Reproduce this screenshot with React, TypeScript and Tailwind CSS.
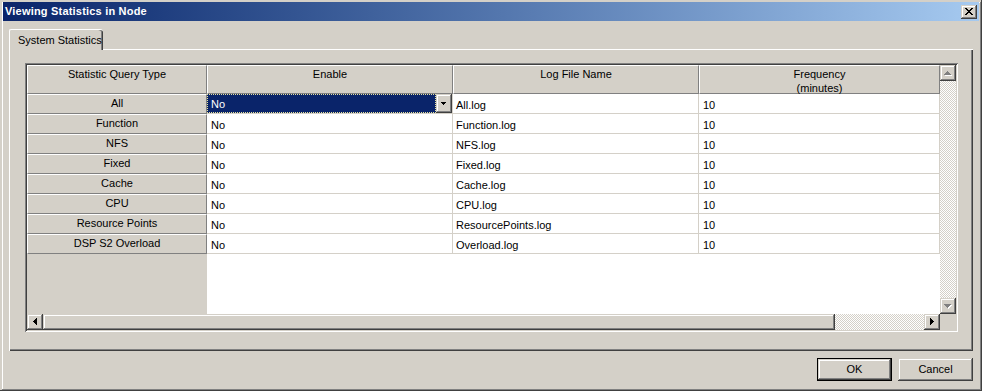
import React from 'react';

const rows = [
  { type: 'All', file: 'All.log' },
  { type: 'Function', file: 'Function.log' },
  { type: 'NFS', file: 'NFS.log' },
  { type: 'Fixed', file: 'Fixed.log' },
  { type: 'Cache', file: 'Cache.log' },
  { type: 'CPU', file: 'CPU.log' },
  { type: 'Resource Points', file: 'ResourcePoints.log' },
  { type: 'DSP S2 Overload', file: 'Overload.log' },
];

const raised =
  'bg-[#d4d0c8] shadow-[inset_-1px_-1px_#404040,inset_1px_1px_#d4d0c8,inset_-2px_-2px_#808080,inset_2px_2px_#ffffff]';
const checker =
  'bg-[image:repeating-conic-gradient(#d4d0c8_0_25%,#ffffff_0_50%)] bg-[length:2px_2px]';

const Arrow: React.FC<{ dir: 'up' | 'down' | 'left' | 'right'; disabled?: boolean }> = ({ dir, disabled }) => {
  const fill = disabled ? '#808080' : '#000000';
  const shapes: Record<string, number[][]> = {
    up: [[7, 6, 1, 1], [6, 7, 3, 1], [5, 8, 5, 1], [4, 9, 7, 1]],
    down: [[4, 6, 7, 1], [5, 7, 5, 1], [6, 8, 3, 1], [7, 9, 1, 1]],
    left: [[6, 7, 1, 1], [7, 6, 1, 3], [8, 5, 1, 5], [9, 4, 1, 7]],
    right: [[6, 4, 1, 7], [7, 5, 1, 5], [8, 6, 1, 3], [9, 7, 1, 1]],
  };
  return (
    <svg width="16" height="16" viewBox="0 0 16 16" shapeRendering="crispEdges">
      {disabled &&
        shapes[dir].map((r, i) => (
          <rect key={'s' + i} x={r[0] + 1} y={r[1] + 1} width={r[2]} height={r[3]} fill="#ffffff" />
        ))}
      {shapes[dir].map((r, i) => (
        <rect key={i} x={r[0]} y={r[1]} width={r[2]} height={r[3]} fill={fill} />
      ))}
    </svg>
  );
};

const ScrollBtn: React.FC<{ dir: 'up' | 'down' | 'left' | 'right'; disabled?: boolean }> = ({ dir, disabled }) => (
  <div className={`w-[16px] h-[16px] shrink-0 ${raised}`}>
    <Arrow dir={dir} disabled={disabled} />
  </div>
);

const headCell = 'bg-[#d4d0c8] border border-t-white border-l-white border-r-[#808080] border-b-[#808080]';
const dataCell = 'bg-white border-r border-b border-[#d4d0c8] pl-[3px] pt-[3px] flex items-center';

export default function App() {
  return (
    <div className="w-[982px] h-[391px] bg-[#d4d0c8] pt-[2px] pl-[3px] pr-[3px] pb-[3px] flex flex-col overflow-hidden font-['Liberation_Sans',Arial,sans-serif] text-[11px] leading-[13px] text-black shadow-[inset_-1px_-1px_#404040,inset_2px_2px_#d4d0c8,inset_-2px_-2px_#808080,inset_3px_3px_#ffffff]">
      {/* Title bar */}
      <div className="h-[19px] shrink-0 flex items-center justify-between pl-[2px] pr-[2px] bg-linear-to-r from-[#0a246a] to-[#a6caf0]">
        <span className="text-white font-bold tracking-[0.2px]">Viewing Statistics in Node</span>
        <div className={`w-[16px] h-[14px] ${raised} flex items-center justify-center`}>
          <svg width="16" height="14" viewBox="0 0 16 14" shapeRendering="crispEdges">
            <path d="M4 3h2v1h1v1h2V4h1V3h2v1h-1v1h-1v1h-1v1h1v1h1v1h1v1h-2V9H9V8H7v1H6v1H4V9h1V8h1V7h1V6H6V5H5V4H4z" fill="#000" />
          </svg>
        </div>
      </div>

      {/* Body */}
      <div className="flex-1 flex flex-col px-[6px] pt-[8px]">
        <div className="flex">
          <div className="relative z-10 h-[21px] -mb-[1px] w-[94px] bg-[#d4d0c8] border-l border-t border-white rounded-tl-[2px] rounded-tr-[3px] shadow-[inset_-1px_0_#404040,inset_-2px_0_#808080] pl-[8px] pt-[4px]">
            System Statistics
          </div>
        </div>

        <div className="h-[302px] shrink-0 bg-[#d4d0c8] pt-[14px] pl-[16px] pr-[15px] pb-[19px] shadow-[inset_1px_1px_#ffffff,inset_-1px_-1px_#404040,inset_-2px_-2px_#808080]">
          <div className="h-full p-[2px] flex shadow-[inset_1px_1px_#808080,inset_-1px_-1px_#ffffff,inset_2px_2px_#404040,inset_-2px_-2px_#d4d0c8]">
            {/* Table + horizontal scrollbar */}
            <div className="w-[913px] flex flex-col">
              <div className="flex h-[29px] shrink-0">
                <div className={`w-[180px] ${headCell} text-center pt-[2px]`}>Statistic Query Type</div>
                <div className={`w-[246px] ${headCell} text-center pt-[2px]`}>Enable</div>
                <div className={`w-[246px] ${headCell} text-center pt-[2px]`}>Log File Name</div>
                <div className={`w-[241px] ${headCell} text-center pt-[1px] leading-[14px]`}>
                  <div>Frequency</div>
                  <div>(minutes)</div>
                </div>
              </div>

              {rows.map((r, i) => (
                <div key={r.type} className="flex h-[20px] shrink-0">
                  <div className={`w-[180px] ${headCell} flex items-center justify-center pb-[2px]`}>{r.type}</div>
                  {i === 0 ? (
                    <div className="w-[246px] bg-white border-r border-b border-[#d4d0c8] flex">
                      <div className="flex-1 bg-[#0a246a] text-white pl-[3px] pt-[2px] flex items-center border border-dotted border-[#e8e4a0]">
                        No
                      </div>
                      <div className={`w-[16px] ${raised}`}>
                        <svg width="16" height="19" viewBox="0 0 16 19" shapeRendering="crispEdges">
                          <rect x="5" y="8" width="5" height="1" fill="#000" />
                          <rect x="6" y="9" width="3" height="1" fill="#000" />
                          <rect x="7" y="10" width="1" height="1" fill="#000" />
                        </svg>
                      </div>
                    </div>
                  ) : (
                    <div className={`w-[246px] ${dataCell} pl-[4px]`}>No</div>
                  )}
                  <div className={`w-[246px] ${dataCell}`}>{r.file}</div>
                  <div className={`w-[241px] ${dataCell} pl-[4px]`}>10</div>
                </div>
              ))}

              <div className="flex-1 flex">
                <div className="w-[180px] bg-[#d4d0c8]" />
                <div className="flex-1 bg-white" />
              </div>

              <div className="h-[16px] shrink-0 flex">
                <ScrollBtn dir="left" />
                <div className={`w-[792px] h-[16px] ${raised}`} />
                <div className={`flex-1 ${checker}`} />
                <ScrollBtn dir="right" />
              </div>
            </div>

            {/* Vertical scrollbar */}
            <div className="w-[16px] flex flex-col">
              <ScrollBtn dir="up" disabled />
              <div className={`flex-1 ${checker}`} />
              <ScrollBtn dir="down" disabled />
              <div className="h-[16px] shrink-0 bg-[#d4d0c8]" />
            </div>
          </div>
        </div>

        <div className="flex justify-end gap-[6px] pt-[7px]">
          <div className="w-[75px] h-[23px] border border-black">
            <div className={`w-full h-full ${raised} flex items-center justify-center`}>OK</div>
          </div>
          <div className={`w-[75px] h-[23px] ${raised} flex items-center justify-center`}>Cancel</div>
        </div>
      </div>
    </div>
  );
}
